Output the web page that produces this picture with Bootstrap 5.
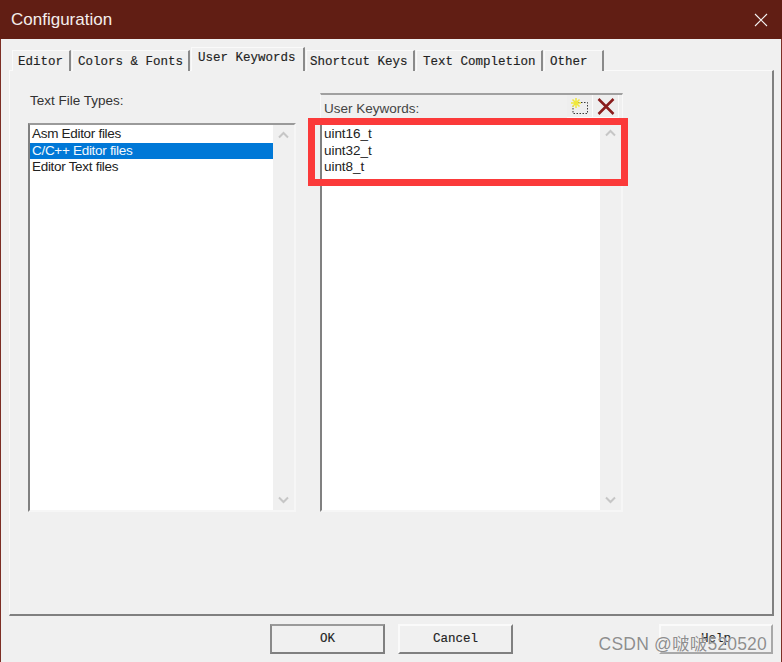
<!DOCTYPE html>
<html lang="en">
<head>
<meta charset="utf-8">
<title>Configuration</title>
<link rel="stylesheet" href="https://cdn.jsdelivr.net/npm/bootstrap@5.3.0/dist/css/bootstrap.min.css">
<style>
html,body{height:100%;overflow:hidden}
body{background:#f0f0f0;font-family:"Liberation Sans",Arial,sans-serif;color:#111}
.cfg-win{height:662px;border-left:1px solid #7d2f25;border-right:1px solid #7d2f25;position:relative;background:#f0f0f0}
.cfg-title{height:39px;background:#611e14;color:#f4eeec;font-size:17px;padding:0 10px 0 11px;margin:0 -1px}
.cfg-tabs{height:24px;margin:8px 0 -1px 11px;position:relative;z-index:1}
.cfg-tab{height:21px;font:12.5px/22px "Liberation Mono",monospace;-webkit-text-stroke:.15px #222;color:#222;background:#f0f0f0;border-top:1px solid #fafafa;border-left:1px solid #fafafa;border-right:2px solid #8a8a8a;padding:0 0 0 5px;white-space:pre;margin-right:1px}
.cfg-tab-on{height:24px;line-height:21px;padding:0 0 3px 6px;margin-right:1px}
.cfg-w1{width:59px}.cfg-w2{width:118px}.cfg-w3{width:114px}
.cfg-w4{width:109px;padding-left:3px}.cfg-w5{width:127px;padding-left:6px}.cfg-w6{width:60px}
.cfg-page{flex:1 1 auto;margin-left:8px;margin-right:7px;border:1px solid #fafafa;border-right:2px solid #808080;border-bottom:2px solid #808080;padding:22px 0 102px 18px;min-height:0}
.cfg-left{width:268px}
.cfg-right{width:303px;margin-left:24px}
.cfg-cap{height:30px;font-size:13.5px;line-height:16px;color:#333;padding-left:2px}
.cfg-box{flex:1 1 auto;border-style:solid;border-width:2px;border-color:#9a9a9a #f6f6f6 #f6f6f6 #808080;min-height:0}
.cfg-box-r{border-top:0}
.cfg-items{flex:1 1 auto;background:#fff;font-size:13.5px;line-height:16.5px;color:#222;letter-spacing:-.3px;padding-top:1px;border:0;border-radius:0}
.cfg-items-r{letter-spacing:-.05px}
.cfg-item{padding:0 0 0 2px;height:16.5px;white-space:nowrap}
.cfg-sel{background:#0078d7;color:#f2f8fd}
.cfg-scroll{width:21px;background:#f0f0f0;padding:6px 0 6px}
.cfg-scroll-r{padding-top:4px}
.cfg-head{height:32px;border-top:2px solid #a0a0a0;border-left:1px solid #f8f8f8;border-right:1px solid #f8f8f8;font-size:13.5px;color:#444}
.cfg-head-t{padding:5px 0 0 3px;line-height:17px}
.cfg-tools{padding-right:3px}
.cfg-ico{width:26px;height:23px;border:0;border-right:1px solid #fbfbfb;border-bottom:1px solid #fbfbfb;background:#eee;padding:0}
.cfg-foot{height:46px;padding:8px 8px 0 269px}
.cfg-btn{width:115px;height:30px;font:12.5px/1 "Liberation Mono",monospace;-webkit-text-stroke:.15px #222;color:#222;background:#f0f0f0;border-style:solid;border-width:2px;border-color:#9a9a9a #808080 #808080 #8a8a8a;border-radius:0;padding:0}
.cfg-btn-b{border-color:#fafafa #808080 #808080 #fafafa}
.cfg-btn-c{margin-left:13px}
.cfg-btn-h{width:114px;border-color:#fafafa #a8a8a8 #a8a8a8 #fafafa}
.cfg-mark{position:absolute;left:307px;top:118px;width:320px;height:68px;border:7px solid #fb3a3a;pointer-events:none}
.cfg-water{position:absolute;left:210px;top:633px;width:556px;text-align:right;font-size:17.5px;letter-spacing:.2px;line-height:22px;color:#8e8e8e;font-family:"Liberation Sans","Noto Sans CJK SC",sans-serif;text-shadow:0 0 1px #fff;white-space:nowrap;pointer-events:none}
</style>
</head>
<body>
<div class="cfg-win d-flex flex-column">
  <div class="cfg-title d-flex align-items-center justify-content-between">
    <span>Configuration</span>
    <svg width="14" height="14" viewBox="0 0 14 14" fill="none" stroke="#f4f4f4" stroke-width="1.1" class="me-1"><path d="M1 1l12 12M13 1L1 13"/></svg>
  </div>
  <div class="cfg-tabs d-flex align-items-end">
    <div class="cfg-tab cfg-w1">Editor</div>
    <div class="cfg-tab cfg-w2">Colors &amp; Fonts</div>
    <div class="cfg-tab cfg-tab-on cfg-w3">User Keywords</div>
    <div class="cfg-tab cfg-w4">Shortcut Keys</div>
    <div class="cfg-tab cfg-w5">Text Completion</div>
    <div class="cfg-tab cfg-w6">Other</div>
  </div>
  <div class="cfg-page d-flex">
    <div class="cfg-left d-flex flex-column">
      <div class="cfg-cap">Text File Types:</div>
      <div class="cfg-box d-flex">
        <div class="cfg-items list-group">
          <div class="cfg-item">Asm Editor files</div>
          <div class="cfg-item cfg-sel">C/C++ Editor files</div>
          <div class="cfg-item">Editor Text files</div>
        </div>
        <div class="cfg-scroll d-flex flex-column justify-content-between align-items-center">
          <svg width="11" height="8" viewBox="0 0 11 8" fill="none" stroke="#c6c6c6" stroke-width="2"><path d="M1 6.5l4.5-4.5 4.5 4.5"/></svg>
          <svg width="11" height="8" viewBox="0 0 11 8" fill="none" stroke="#c6c6c6" stroke-width="2"><path d="M1 1.5l4.5 4.5 4.5-4.5"/></svg>
        </div>
      </div>
    </div>
    <div class="cfg-right d-flex flex-column">
      <div class="cfg-head d-flex justify-content-between">
        <div class="cfg-head-t">User Keywords:</div>
        <div class="cfg-tools d-flex">
          <button class="cfg-ico d-flex align-items-center justify-content-center" aria-label="New">
            <svg width="20" height="18" viewBox="0 0 20 18" fill="none"><path d="M5 5.5H17.5V16.5H3V9" stroke="#3a3a3a" stroke-dasharray="1.5 1.5"/><path d="M6 1v10M1 6h10M2.5 2.5l7 7M9.5 2.5l-7 7" stroke="#f0e83c" stroke-width="1.5"/></svg>
          </button>
          <button class="cfg-ico d-flex align-items-center justify-content-center" aria-label="Delete">
            <svg width="18" height="17" viewBox="0 0 18 17" fill="none" stroke="#8a1c1c" stroke-width="2.5"><path d="M1.5 1l15 15M16.5 1l-15 15"/></svg>
          </button>
        </div>
      </div>
      <div class="cfg-box cfg-box-r d-flex">
        <div class="cfg-items cfg-items-r list-group">
          <div class="cfg-item">uint16_t</div>
          <div class="cfg-item">uint32_t</div>
          <div class="cfg-item">uint8_t</div>
        </div>
        <div class="cfg-scroll cfg-scroll-r d-flex flex-column justify-content-between align-items-center">
          <svg width="11" height="8" viewBox="0 0 11 8" fill="none" stroke="#c6c6c6" stroke-width="2"><path d="M1 6.5l4.5-4.5 4.5 4.5"/></svg>
          <svg width="11" height="8" viewBox="0 0 11 8" fill="none" stroke="#c6c6c6" stroke-width="2"><path d="M1 1.5l4.5 4.5 4.5-4.5"/></svg>
        </div>
      </div>
    </div>
  </div>
  <div class="cfg-foot d-flex">
    <button class="btn cfg-btn">OK</button>
    <button class="btn cfg-btn cfg-btn-b cfg-btn-c me-auto">Cancel</button>
    <button class="btn cfg-btn cfg-btn-h">Help</button>
  </div>
  <div class="cfg-mark"></div>
  <div class="cfg-water">CSDN @啵啵520520</div>
</div>
<script src="https://cdn.jsdelivr.net/npm/bootstrap@5.3.0/dist/js/bootstrap.bundle.min.js"></script>
</body>
</html>
